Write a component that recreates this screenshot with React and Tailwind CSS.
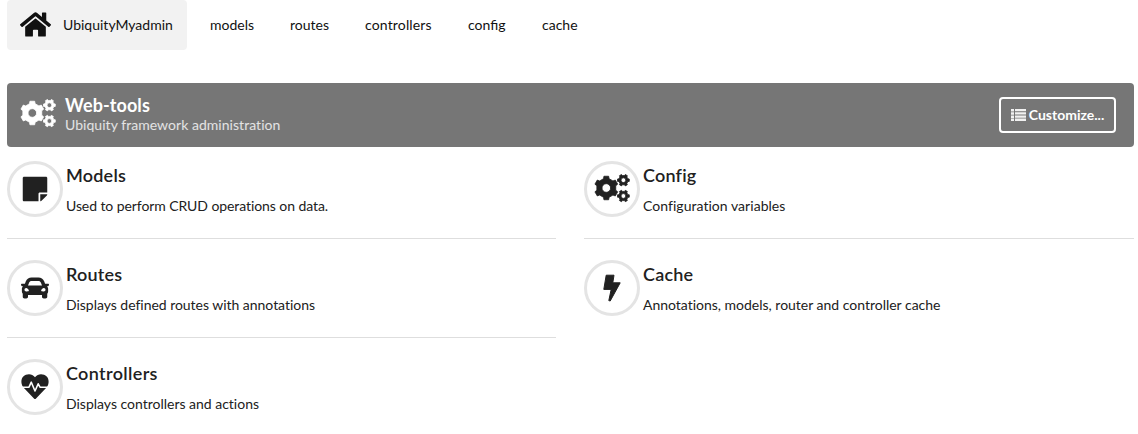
import { FaHome, FaStickyNote, FaCar } from "react-icons/fa";

function gearPath(cx, cy, outer, inner, hole, teeth, offset) {
  const step = (Math.PI * 2) / teeth;
  const point = (r, a) => `${(cx + r * Math.cos(a)).toFixed(2)} ${(cy + r * Math.sin(a)).toFixed(2)}`;
  const points = [];
  for (let i = 0; i < teeth; i++) {
    const a = offset + i * step;
    points.push(point(inner, a - step * 0.28), point(outer, a - step * 0.19), point(outer, a + step * 0.19), point(inner, a + step * 0.28));
  }
  return `M${points.join("L")}ZM${cx - hole} ${cy}a${hole} ${hole} 0 1 0 ${hole * 2} 0a${hole} ${hole} 0 1 0 ${-hole * 2} 0Z`;
}

function Cogs({ className }) {
  return (
    <svg viewBox="0 0 36 30" className={className} fill="currentColor" stroke="currentColor" strokeWidth="0.8" strokeLinejoin="round" fillRule="evenodd">
      <path d={gearPath(12.3, 14, 12, 9.7, 4.3, 6, Math.PI / 2)} />
      <path d={gearPath(29.4, 6.2, 6, 4.7, 2.4, 6, 0)} />
      <path d={gearPath(29.4, 22, 6, 4.7, 2.4, 6, 0)} />
    </svg>
  );
}

function Bolt({ className }) {
  return (
    <svg viewBox="0 0 28 28" className={className} fill="currentColor" stroke="currentColor" strokeLinejoin="round">
      <path d="M8.2 1.2H16L14.8 8.8H22.2L12.2 27L10.8 26.6L13.2 15.4H5.8Z" />
    </svg>
  );
}

function Heartbeat({ className }) {
  return (
    <svg viewBox="0 0 28 28" className={className}>
      <path fill="currentColor" d="M14 4.2C11 .3 5.500.5 2.300 3.500C-.3 6.200-.1 10.500 2 14L13.200 25.700Q14 26.500 14.800 25.700L26 14C28.200 10.500 28.200 6.200 25.700 3.500C22.500.5 17 .3 14 4.200Z" />
      <path d="M0 14.200H8L10.300 9.200L14 18L17.200 10.800L19 14.200H28" fill="none" stroke="white" strokeWidth="1.6" strokeLinejoin="round" />
    </svg>
  );
}

function List() {
  return (
    <svg viewBox="0 0 15 12" className="h-3 w-[15px] opacity-90" fill="currentColor">
      <path d="M0 0h3v2.500H0zM0 3.200h3v2.500H0zM0 6.400h3v2.500H0zM0 9.500h3V12H0zM4 0h11v2.300H4zM4 3.200h11v2.300H4zM4 6.400h11v2.300H4zM4 9.600h11V12H4z" />
    </svg>
  );
}

const tools = [
  [
    { title: "Models", text: "Used to perform CRUD operations on data.", Icon: FaStickyNote, tracking: "tracking-[-0.08px]" },
    { title: "Routes", text: "Displays defined routes with annotations", Icon: FaCar, tracking: "tracking-[-0.03px]" },
    { title: "Controllers", text: "Displays controllers and actions", Icon: Heartbeat, titleTracking: "tracking-[0.35px]" },
  ],
  [
    { title: "Config", text: "Configuration variables", Icon: Cogs, iconSize: "h-[30px] w-9", tracking: "tracking-[0.04px]" },
    { title: "Cache", text: "Annotations, models, router and controller cache", Icon: Bolt },
  ],
];

function Tool({ title, text, Icon, iconSize = "size-7 -mt-px", tracking = "tracking-[-0.01px]", titleTracking = "tracking-[0.2px]" }) {
  return (
    <div className="flex h-[99px] border-b border-[#dedede] pt-[21px] last:border-0">
      <div className="flex size-14 shrink-0 items-center justify-center rounded-full border-3 border-[#e4e4e4]">
        <Icon className={`shrink-0 ${iconSize}`} />
      </div>
      <div className="pl-[3px]">
        <h2 className={`mt-[2px] text-[18px] leading-6 font-semibold ${titleTracking}`}>{title}</h2>
        <p className={`mt-[9px] text-[14px] leading-5 ${tracking}`}>{text}</p>
      </div>
    </div>
  );
}

export default function App() {
  return (
    <div className="h-[434px] overflow-hidden bg-white px-[7px] pr-1 font-['Lato',sans-serif] text-[14px] text-[#212121]">
      <nav className="flex h-[50px] items-center text-[#111]">
        <a className="flex h-full w-[180px] items-center rounded bg-[#f2f2f2] pl-[13px]">
          <FaHome className="mr-3 -mt-px size-[31px]" />
          <span className="-mt-0.5">UbiquityMyadmin</span>
        </a>
        <div className="-mt-0.5 ml-[23px] flex">
          <a className="w-20">models</a>
          <a className="w-[75px]">routes</a>
          <a className="w-[103px] tracking-[0.15px]">controllers</a>
          <a className="w-[74px]">config</a>
          <a>cache</a>
        </div>
      </nav>
      <header className="mt-[33px] flex h-16 items-center rounded bg-[#767676] pr-[18px] pl-[13px] text-white">
        <Cogs className="-mt-0.5 h-[30px] w-9" />
        <div className="ml-[9px] flex-1">
          <h1 className="text-[18px] leading-5 font-bold tracking-[0.1px]">Web-tools</h1>
          <p className="leading-5 tracking-[0.04px] text-white/80">Ubiquity framework administration</p>
        </div>
        <button className="flex h-9 w-[117px] items-center justify-center gap-[3px] rounded border-2 border-white font-bold">
          <List />
          <span className="-mt-0.5">Customize...</span>
        </button>
      </header>
      <main className="-mt-[7px] grid grid-cols-[549px_550px] gap-7">
        {tools.map((items, i) => (
          <section key={i}>
            {items.map((item) => <Tool key={item.title} {...item} />)}
          </section>
        ))}
      </main>
    </div>
  );
}
